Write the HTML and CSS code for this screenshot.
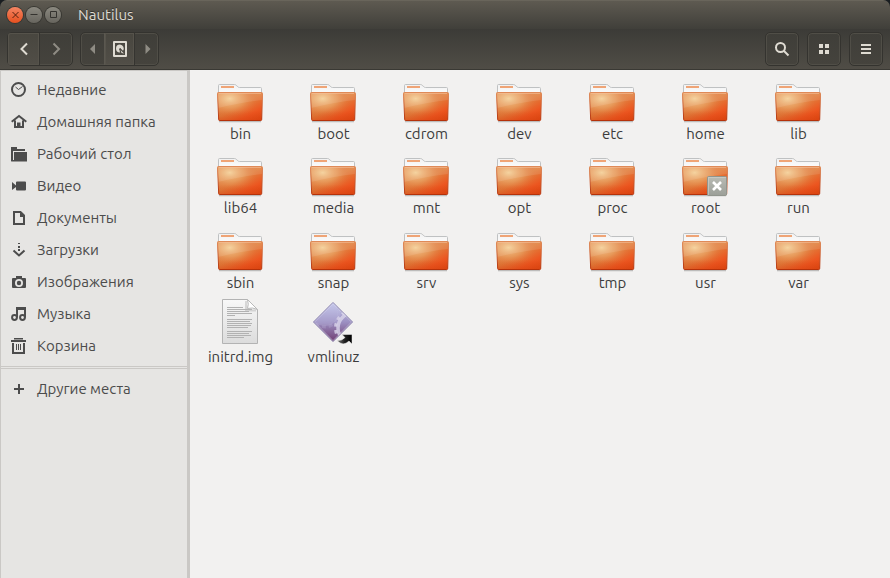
FILE: index.html
```html
<!DOCTYPE html>
<html lang="ru">
<head>
<meta charset="utf-8">
<title>Nautilus</title>
<link rel="stylesheet" href="styles.css">
</head>
<body>
<svg class="defs" aria-hidden="true">
  <defs>
    <linearGradient id="tab" x1="0" y1="0" x2="0" y2="1"><stop offset="0" stop-color="#f1f1f1"/><stop offset="1" stop-color="#fff"/></linearGradient>
    <linearGradient id="front" x1="0" y1="0" x2=".9" y2="1"><stop offset="0" stop-color="#df8a50"/><stop offset=".5" stop-color="#e0803e"/><stop offset=".8" stop-color="#ec5620"/><stop offset="1" stop-color="#e24a14"/></linearGradient>
    <radialGradient id="shine" cx=".27" cy=".22" r=".65"><stop offset="0" stop-color="#f4cf96"/><stop offset=".5" stop-color="#eaa264" stop-opacity=".7"/><stop offset="1" stop-color="#e66b33" stop-opacity="0"/></radialGradient>
    <linearGradient id="foot" x1="0" y1="0" x2="0" y2="1"><stop offset=".65" stop-color="#d03c0c" stop-opacity="0"/><stop offset="1" stop-color="#d03c0c" stop-opacity=".4"/></linearGradient>
    <linearGradient id="edge" x1="0" y1="0" x2="0" y2="1"><stop offset="0" stop-color="#df8a58"/><stop offset="1" stop-color="#b5320a"/></linearGradient>
    <linearGradient id="badge" x1="0" y1="0" x2="0" y2="1"><stop offset="0" stop-color="#b9bbb4"/><stop offset="1" stop-color="#9c9f98"/></linearGradient>
    <linearGradient id="paper" x1="0" y1="0" x2="0" y2="1"><stop offset="0" stop-color="#f8f8f8"/><stop offset="1" stop-color="#dcdcdc"/></linearGradient>
    <linearGradient id="gem" x1="0" y1="0" x2="0" y2="1"><stop offset="0" stop-color="#c3c6ea"/><stop offset=".5" stop-color="#9c90c2"/><stop offset="1" stop-color="#703d72"/></linearGradient>
    <linearGradient id="arrow" x1="0" y1="0" x2="1" y2="0"><stop offset="0" stop-color="#777"/><stop offset=".5" stop-color="#222"/><stop offset="1" stop-color="#000"/></linearGradient>
    <clipPath id="gemclip"><path d="M24 4 43 23 24 42 5 23z"/></clipPath>
  </defs>
  <symbol id="folder" viewBox="0 0 48 48">
    <path d="M3 45.500h42" stroke="#000" stroke-opacity=".22" stroke-width="1.500"/>
    <path d="M2.500 20V9.500q0-1 1-1H18.500q1 0 1.700.8l1.600 1.400q.7.800 1.700.8h21q1 0 1 1V20z" fill="url(#tab)" stroke="#bfc1c2"/>
    <path d="M5 11h13" stroke="#efa476" stroke-width="2"/>
    <path d="M1.500 17.500q0-1 1-1h43q1 0 1 1L45.700 43.500q0 1-1 1h-41q-1 0-1-1z" fill="url(#front)"/>
    <path d="M1.500 16.500h45L45.500 44.500h-43z" fill="url(#shine)"/>
    <path d="M2 17h44v7Q27 26 2 32z" fill="#fff" fill-opacity=".1"/>
    <path d="M1.500 16.500h45L45.500 44.500h-43z" fill="url(#foot)"/>
    <path d="M1.500 17.500q0-1 1-1h43q1 0 1 1L45.700 43.500q0 1-1 1h-41q-1 0-1-1z" fill="none" stroke="url(#edge)"/>
    <path d="M3 17.500h42" stroke="#f5bf9a" stroke-opacity=".6"/>
  </symbol>
</svg>
<div class="window">
  <header class="chrome">
    <div class="titlebar">
      <button class="wm close" aria-label="Закрыть"><svg viewBox="0 0 16 16"><path d="M5.500 5l6 6m0-6l-6 6"/></svg></button>
      <button class="wm" aria-label="Свернуть"><svg viewBox="0 0 16 16"><path d="M4.500 7.500h7"/></svg></button>
      <button class="wm" aria-label="Развернуть"><svg viewBox="0 0 16 16"><path d="M5.500 4.500h6v6h-6z"/></svg></button>
      <h1>Nautilus</h1>
    </div>
    <div class="toolbar">
      <div class="group nav">
        <button class="on" aria-label="Назад"><svg viewBox="0 0 16 16"><path class="line" d="M11 2.500 5.500 8l5.500 5.500"/></svg></button>
        <button class="dim" aria-label="Вперёд"><svg viewBox="0 0 16 16"><path class="line" d="M5.500 2.500 11 8l-5.500 5.500"/></svg></button>
      </div>
      <div class="group path">
        <button class="dim" aria-label="Предыдущий"><svg viewBox="0 0 16 16"><path d="M10 3v10L5 8z"/></svg></button>
        <button class="on disk" aria-label="Компьютер"><svg viewBox="0 0 16 16"><path fill-rule="evenodd" d="M2 0h12q1 0 1 1v14q0 1-1 1H2q-1 0-1-1V1q0-1 1-1zm1 2v12h10V2z"/><path d="M8 3.500a4 4 0 1 0 0 8l-.5-2.500a1 1 0 1 1 1.500-1.200l2 2A4 4 0 0 0 8 3.500zM8.500 9l3.500 3.500-2.500-.5z"/></svg></button>
        <button class="dim" aria-label="Следующий"><svg viewBox="0 0 16 16"><path d="M6.500 3v10l5-5z"/></svg></button>
      </div>
      <div class="actions">
        <button class="single" aria-label="Поиск"><svg viewBox="0 0 16 16"><circle class="line" cx="6.500" cy="6.500" r="4.500"/><path class="line" d="M10 10l4.500 4.500"/></svg></button>
        <button class="single" aria-label="Вид"><svg viewBox="0 0 16 16"><path d="M3 3h4v4H3zM9 3h4v4H9zM3 9h4v4H3zM9 9h4v4H9z"/></svg></button>
        <button class="single" aria-label="Меню"><svg viewBox="0 0 16 16"><path d="M3 3h10v2H3zM3 7h10v2H3zM3 11h10v2H3z"/></svg></button>
      </div>
    </div>
  </header>
  <div class="body">
    <nav class="sidebar">
      <a href="#"><svg viewBox="0 0 16 16"><circle class="line" cx="7.500" cy="7.500" r="6.500"/><path class="thin" d="M4.500 5l3 2.500 4-3"/></svg>Недавние</a>
      <a href="#"><svg viewBox="0 0 16 16"><path class="line" d="M.7 7.700 8 2l7.300 5.700M4 6.500V13h8V6.500"/><path d="M6 8.500h3.500V14H6z"/></svg>Домашняя папка</a>
      <a href="#"><svg viewBox="0 0 16 16"><path d="M0 1h6v2h8v2H2v10H0zM3 6h13v9.500H3zM1 14h3v1.500H0z"/></svg>Рабочий стол</a>
      <a href="#"><svg viewBox="0 0 16 16"><path d="M1 4l4 3.500V4.500q0-1 1-1h8q1 0 1 1v7q0 1-1 1H6q-1 0-1-1V9l-4 3z"/></svg>Видео</a>
      <a href="#"><svg viewBox="0 0 16 16"><path class="line" d="M3 2h6.500L13 5.500V14H3z"/><path d="M9 2h1l4 4v1H9z"/></svg>Документы</a>
      <a href="#"><svg viewBox="0 0 16 16"><path d="M7 1h2v1H7zM7 4h2v2H7zM7 7h2v2H7z"/><path class="line" d="M2.500 8.500 8 13.500l5.500-5"/></svg>Загрузки</a>
      <a href="#"><svg viewBox="0 0 16 16"><path fill-rule="evenodd" d="M5 2h6v2h3q1 0 1 1v8q0 1-1 1H2q-1 0-1-1V5q0-1 1-1h3zM8 5a4 4 0 1 0 0 8 4 4 0 0 0 0-8z"/><circle cx="8" cy="9" r="2.200"/></svg>Изображения</a>
      <a href="#"><svg viewBox="0 0 16 16"><circle class="line" cx="3.500" cy="11.500" r="2.400"/><circle class="line" cx="11.500" cy="11.500" r="2.400"/><path class="line" d="M6 11.500V2h8v9.500M6 3h8"/></svg>Музыка</a>
      <a href="#"><svg viewBox="0 0 16 16"><path d="M0 2h15v2H0zM3 0h9v1.500H3z"/><path class="line" d="M2 5v10h11V5"/><path class="thin" d="M5.500 6v6M7.500 6v6M9.500 6v6"/></svg>Корзина</a>
      <hr>
      <a href="#"><svg viewBox="0 0 16 16"><path d="M7 3h2v4h4v2H9v4H7V9H3V7h4z"/></svg>Другие места</a>
    </nav>
    <main class="files">
      <div class="file"><svg><use href="#folder"/></svg><span>bin</span></div>
      <div class="file"><svg><use href="#folder"/></svg><span>boot</span></div>
      <div class="file"><svg><use href="#folder"/></svg><span>cdrom</span></div>
      <div class="file"><svg><use href="#folder"/></svg><span>dev</span></div>
      <div class="file"><svg><use href="#folder"/></svg><span>etc</span></div>
      <div class="file"><svg><use href="#folder"/></svg><span>home</span></div>
      <div class="file"><svg><use href="#folder"/></svg><span>lib</span></div>
      <div class="file"><svg><use href="#folder"/></svg><span>lib64</span></div>
      <div class="file"><svg><use href="#folder"/></svg><span>media</span></div>
      <div class="file"><svg><use href="#folder"/></svg><span>mnt</span></div>
      <div class="file"><svg><use href="#folder"/></svg><span>opt</span></div>
      <div class="file"><svg><use href="#folder"/></svg><span>proc</span></div>
      <div class="file"><svg viewBox="0 0 48 48"><use href="#folder"/><rect x="26.500" y="26.500" width="19" height="19" rx="1" fill="url(#badge)" stroke="#91958d"/><path d="M27.500 45V27.500H45" fill="none" stroke="#d0d2cc" stroke-opacity=".6"/><path d="M32 32l8 8m0-8l-8 8" stroke="#fff" stroke-width="2.600"/></svg><span>root</span></div>
      <div class="file"><svg><use href="#folder"/></svg><span>run</span></div>
      <div class="file"><svg><use href="#folder"/></svg><span>sbin</span></div>
      <div class="file"><svg><use href="#folder"/></svg><span>snap</span></div>
      <div class="file"><svg><use href="#folder"/></svg><span>srv</span></div>
      <div class="file"><svg><use href="#folder"/></svg><span>sys</span></div>
      <div class="file"><svg><use href="#folder"/></svg><span>tmp</span></div>
      <div class="file"><svg><use href="#folder"/></svg><span>usr</span></div>
      <div class="file"><svg><use href="#folder"/></svg><span>var</span></div>
      <div class="file"><svg viewBox="0 0 48 48"><path d="M6.500.5h25l10 10v34h-35z" fill="url(#paper)" stroke="#b3b3b3"/><path d="M30 2v9.500h10" fill="none" stroke="#000" stroke-opacity=".12" stroke-width="2"/><path d="M31.500.5q1.500 5 0 9 5-1.500 10 1z" fill="#fff" stroke="#b8b8b8"/><path d="M11 8.500h16M11 10.500h25M11 12.500h22M11 14.500h25M11 16.500h8M11 20.500h25M11 22.500h23M11 24.500h25M11 26.500h24M11 28.500h21M11 32.500h25M11 34.500h22M11 36.500h24M11 38.500h17" stroke="#b2b2b2"/></svg><span>initrd.img</span></div>
      <div class="file"><svg viewBox="0 0 48 48"><path d="M24 3.500 43.500 23 24 42.500 4.500 23z" fill="url(#gem)" stroke="#827aa9" stroke-linejoin="round"/><g clip-path="url(#gemclip)"><circle cx="16" cy="14" r="13" fill="#d8d9f2" fill-opacity=".18"/><circle cx="16" cy="14" r="14" fill="none" stroke="#d8d9f2" stroke-opacity=".18" stroke-width="3" stroke-dasharray="4 3"/><circle cx="44" cy="29" r="15" fill="none" stroke="#d9d4ea" stroke-opacity=".8" stroke-width="3.500"/><circle cx="44" cy="29" r="17.500" fill="none" stroke="#d9d4ea" stroke-opacity=".8" stroke-width="3" stroke-dasharray="3.500 3.500"/></g><path d="M24 4.500 42.500 23 24 41.500 5.500 23z" fill="none" stroke="#fff" stroke-opacity=".3"/><path d="M28 41.500q6 6.500 12 .5l3 3V35.500H33l3 3q-3 3.500-8 3z" fill="url(#arrow)" stroke="#eee" stroke-width=".5"/></svg><span>vmlinuz</span></div>
    </main>
  </div>
</div>
</body>
</html>
```
FILE: styles.css
```css
* { box-sizing: border-box; }

body {
  margin: 0;
  background: #191d20;
  font-family: Ubuntu, "Noto Sans", sans-serif;
  font-size: 15px;
  line-height: 20px;
  color: #3c3c3c;
}

.defs { position: absolute; width: 0; height: 0; }

button { border: 0; padding: 0; background: none; color: inherit; }

svg { display: block; width: 16px; height: 16px; flex: none; fill: currentColor; }
.line { fill: none; stroke: currentColor; stroke-width: 2; }
.thin { fill: none; stroke: currentColor; stroke-width: 1; }

.window { display: flex; flex-direction: column; min-height: 100vh; }

.chrome { border-radius: 7px 7px 0 0; overflow: hidden; color: #dfdbd2; }

.titlebar {
  display: flex;
  align-items: center;
  gap: 3px;
  height: 29px;
  padding: 0 7px;
  background: linear-gradient(#5e5a51, #403f3a);
  border-top: 1px solid #69655b;
}
.titlebar h1 { margin: 0 0 0 14px; font-size: 15px; font-weight: 400; text-shadow: 0 -1px #33322e; }

.wm {
  width: 16px;
  height: 16px;
  border-radius: 50%;
  background: linear-gradient(#8b8980, #67655e);
  box-shadow: 0 0 0 1px #383732;
  color: #34332f;
}
.wm svg { fill: none; stroke: currentColor; }
.close { background: linear-gradient(#f48563, #e6501f); color: #54210f; }

.toolbar {
  display: flex;
  align-items: center;
  gap: 7px;
  height: 41px;
  padding: 0 7px;
  background: linear-gradient(#3c3b37, #504d46);
  border-bottom: 1px solid #3a3934;
}

.group, .single {
  display: flex;
  height: 34px;
  border: 1px solid #34332f;
  border-radius: 5px;
  background: linear-gradient(#3f3e39, #45433d);
  box-shadow: inset 0 0 0 1px #504e47;
}
.group button { display: flex; align-items: center; justify-content: center; }
.nav button { width: 32px; }
.path button { width: 23px; }
.path .disk { width: 31px; border-left: 1px solid #5b5850; border-right: 1px solid #353430; }
.nav .on { border-right: 1px solid #353430; }
.on { background: linear-gradient(#48463f, #514e47); box-shadow: inset 0 0 0 1px #56534b; border-radius: 3px 0 0 3px; }
.disk { border-radius: 0; }
.dim { color: #8f8c84; }

.actions { display: flex; gap: 8px; margin-left: auto; }
.single { width: 34px; align-items: center; justify-content: center; }

.body { display: flex; flex: 1; }

.sidebar {
  flex: 0 0 190px;
  padding-top: 3px;
  border: 0 solid #cac8c5;
  border-width: 1px 3px 0 1px;
  background: #e6e5e3;
}
.sidebar a {
  display: flex;
  align-items: center;
  gap: 10px;
  height: 32px;
  padding-left: 10px;
  color: #4c4c4c;
  text-decoration: none;
}
.sidebar hr {
  height: 3px;
  margin: 4px 0;
  border: solid #cac8c5;
  border-width: 1px 0;
}

.files {
  flex: 1;
  display: grid;
  grid-template-columns: repeat(auto-fill, 93px);
  grid-auto-rows: 74px 75px;
  align-content: start;
  padding: 6px 0 0 4px;
  background: #f2f1f0;
}
.file { display: flex; flex-direction: column; align-items: center; }
.file svg { width: 48px; height: 48px; margin-right: 1px; }
```
